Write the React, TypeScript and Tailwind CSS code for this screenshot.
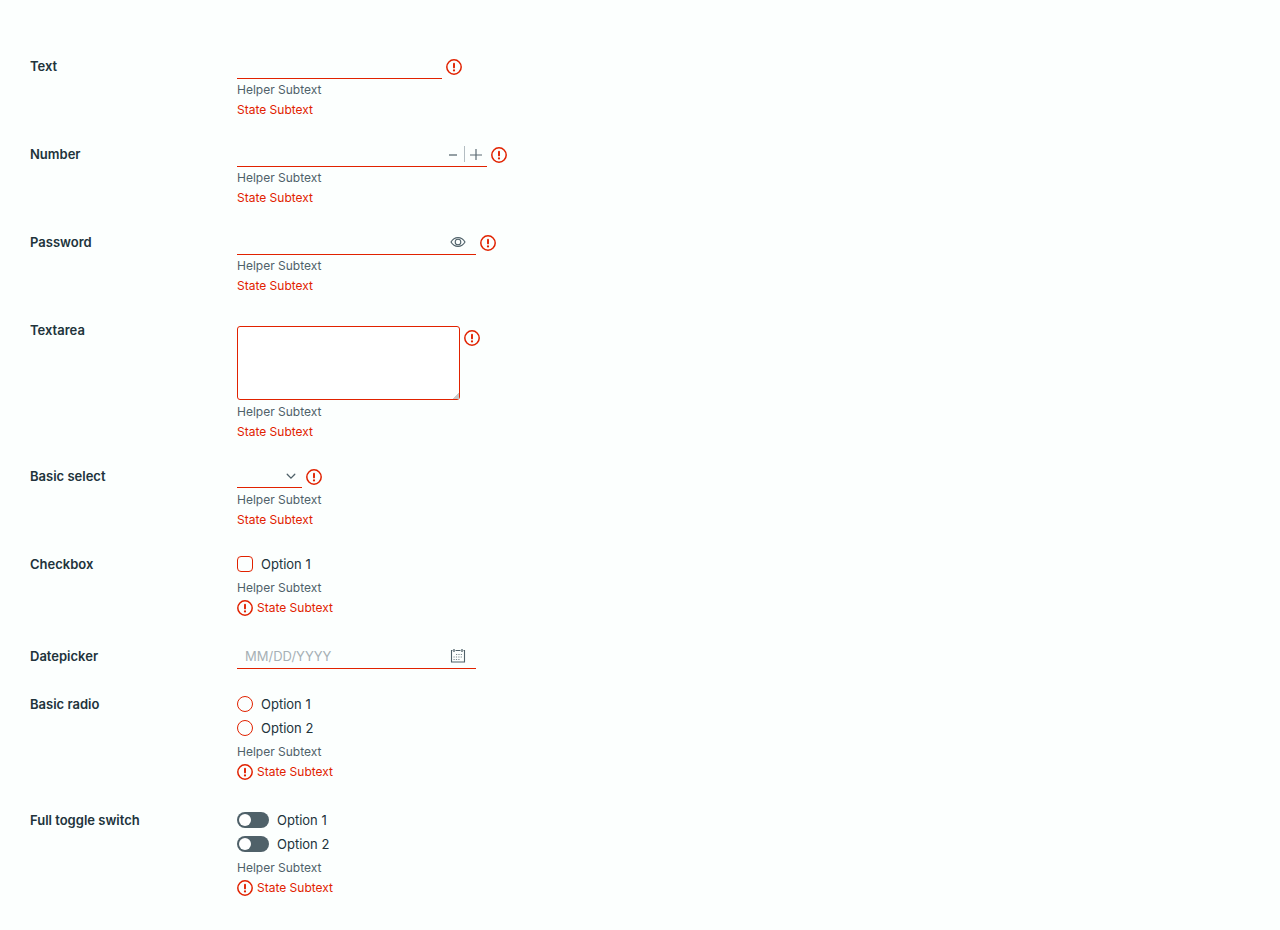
import { useState, type ReactNode } from 'react';

function ErrorIcon() {
  return (
    <svg viewBox="0 0 16 16" className="size-4 shrink-0" fill="none" aria-hidden="true">
      <circle cx="8" cy="8" r="7.2" stroke="#e12200" strokeWidth="1.5" />
      <path d="M8 4.8v3.600" stroke="#e12200" strokeWidth="1.9" strokeLinecap="round" />
      <circle cx="8" cy="11.400" r="1.100" fill="#e12200" />
    </svg>
  );
}

function EyeIcon() {
  return (
    <svg viewBox="0 0 16 16" className="size-4" fill="none" stroke="#4f6169" strokeWidth="1.100" aria-hidden="true">
      <path d="M1 8c1.600-2.800 4-4.400 7-4.400S13.400 5.200 15 8c-1.600 2.800-4 4.400-7 4.400S2.600 10.800 1 8z" />
      <circle cx="8" cy="8" r="2.800" />
    </svg>
  );
}

function CalendarIcon() {
  return (
    <svg viewBox="0 0 16 16" className="size-4" fill="none" stroke="#4f6169" aria-hidden="true">
      <path d="M2.500 2.500h-1v11.500h13V2.500h-1M5.500 2.500h5" strokeWidth="1.100" />
      <path d="M4 1v3M12 1v3" strokeWidth="1.300" />
      <path d="M6 6.500h7M3.500 9h9.500M3.500 11.500h7" strokeOpacity=".75" strokeDasharray="1.200 1.200" />
    </svg>
  );
}

function Row({ label, htmlFor, children }: { label: string; htmlFor?: string; children: ReactNode }) {
  const labelClass = 'w-[207px] shrink-0 text-[13px] leading-[22px] font-semibold text-[#21333b]';
  if (htmlFor) {
    return (
      <div className="flex items-start">
        <label htmlFor={htmlFor} className={labelClass}>{label}</label>
        <div>{children}</div>
      </div>
    );
  }
  return (
    <div role="group" aria-label={label} className="flex items-start">
      <span className={labelClass}>{label}</span>
      <div>{children}</div>
    </div>
  );
}

function Subtext({ icon = false }: { icon?: boolean }) {
  return (
    <div className={icon ? 'pb-1 text-xs' : 'text-xs'}>
      <p className="leading-[22px] text-[#4f6169]">Helper Subtext</p>
      <p className="flex items-center gap-1 leading-[18px] text-[#e12200]">
        {icon && <ErrorIcon />}
        State Subtext
      </p>
    </div>
  );
}

const line = 'border-b border-[#e12200]';
const field = 'h-[22px] min-w-0 flex-1 bg-transparent px-2 text-[13px] text-[#21333b] outline-none placeholder:text-[#a6b0b5]';
const option = 'flex h-6 items-start gap-2 pt-[3px] text-[13px] leading-4 text-[#21333b]';

function NumberField() {
  const [value, setValue] = useState('');
  const step = (by: number) => setValue(String(Number(value) + by));
  return (
    <div className={`${line} flex h-6 w-[250px] items-start`}>
      <input id="number" inputMode="numeric" value={value} onChange={(e) => setValue(e.target.value)} className={field} />
      <button type="button" aria-label="Decrease" onClick={() => step(-1)} className="mt-[3px] flex h-4 w-[23px] items-center justify-center">
        <svg viewBox="0 0 12 12" className="size-3" aria-hidden="true"><path d="M2 7h8" stroke="#5b6b73" strokeWidth="1.300" /></svg>
      </button>
      <button type="button" aria-label="Increase" onClick={() => step(1)} className="mt-[3px] flex h-4 w-[23px] items-center justify-center border-l border-[#b3bdc2]">
        <svg viewBox="0 0 12 12" className="size-3" aria-hidden="true"><path d="M0 7h12M6 1v11" stroke="#5b6b73" strokeWidth="1.200" /></svg>
      </button>
    </div>
  );
}

export default function App() {
  const [visible, setVisible] = useState(false);
  return (
    <main className="min-h-screen bg-[#fcfffe] font-['Inter',sans-serif]">
      <form className="flex flex-col gap-6 px-[30px] pt-[55px]">
        <Row label="Text" htmlFor="text">
          <div className="flex items-center gap-1">
            <div className={`${line} flex h-6 w-[205px]`}><input id="text" type="text" className={field} /></div>
            <ErrorIcon />
          </div>
          <Subtext />
        </Row>
        <Row label="Number" htmlFor="number">
          <div className="flex items-center gap-1">
            <NumberField />
            <ErrorIcon />
          </div>
          <Subtext />
        </Row>
        <Row label="Password" htmlFor="password">
          <div className="flex items-center gap-1">
            <div className={`${line} flex h-6 w-[239px] items-start pr-[10px]`}>
              <input id="password" type={visible ? 'text' : 'password'} className={field} />
              <button type="button" aria-label="Show password" onClick={() => setVisible(!visible)} className="pt-[3px]"><EyeIcon /></button>
            </div>
            <ErrorIcon />
          </div>
          <Subtext />
        </Row>
        <Row label="Textarea" htmlFor="textarea">
          <div className="flex items-start gap-1 pt-[7px] pb-px">
            <textarea
              id="textarea"
              className="h-[74px] w-[223px] rounded-[3px] border border-[#e12200] bg-white px-3 py-1 text-[13px] text-[#21333b] outline-none [&::-webkit-resizer]:bg-[linear-gradient(135deg,transparent_80%,#c8c8c8_80%)]"
            />
            <div className="pt-1"><ErrorIcon /></div>
          </div>
          <Subtext />
        </Row>
        <Row label="Basic select" htmlFor="select">
          <div className="flex h-6 items-start gap-1">
            <div className="grid w-[65px] items-center">
              <select id="select" defaultValue="" className={`${line} col-start-1 row-start-1 h-[23px] w-full appearance-none bg-transparent px-2 text-[13px] text-[#21333b] outline-none`}>
                <option value="" aria-label="None" />
              </select>
              <svg viewBox="0 0 10 10" className="pointer-events-none col-start-1 row-start-1 mr-[6px] size-[10px] justify-self-end" fill="none" aria-hidden="true">
                <path d="M1.200 2.300 5 6.100l3.800-3.800" stroke="#4f6169" strokeWidth="1.300" strokeLinecap="round" />
              </svg>
            </div>
            <div className="pt-1"><ErrorIcon /></div>
          </div>
          <Subtext />
        </Row>
        <Row label="Checkbox">
          <label className={option}>
            <input type="checkbox" className="size-4 appearance-none rounded-[4px] border border-[#e12200] checked:bg-[#e12200]" />
            Option 1
          </label>
          <Subtext icon />
        </Row>
        <Row label="Datepicker" htmlFor="date">
          <div className={`${line} flex h-6 w-[239px] items-start pr-[10px]`}>
            <input id="date" type="text" placeholder="MM/DD/YYYY" className={field} />
            <button type="button" aria-label="Choose date" className="pt-[3px]"><CalendarIcon /></button>
          </div>
        </Row>
        <Row label="Basic radio">
          {['Option 1', 'Option 2'].map((name) => (
            <label key={name} className={option}>
              <input type="radio" name="radio" className="size-4 appearance-none rounded-full border border-[#e12200] checked:border-4" />
              {name}
            </label>
          ))}
          <Subtext icon />
        </Row>
        <Row label="Full toggle switch">
          {['Option 1', 'Option 2'].map((name) => (
            <label key={name} className={option}>
              <input
                type="checkbox"
                role="switch"
                className="flex h-4 w-8 appearance-none rounded-full bg-[#4f6169] p-[2px] before:size-3 before:rounded-full before:bg-white checked:justify-end checked:bg-[#5aa220]"
              />
              {name}
            </label>
          ))}
          <Subtext icon />
        </Row>
      </form>
    </main>
  );
}
